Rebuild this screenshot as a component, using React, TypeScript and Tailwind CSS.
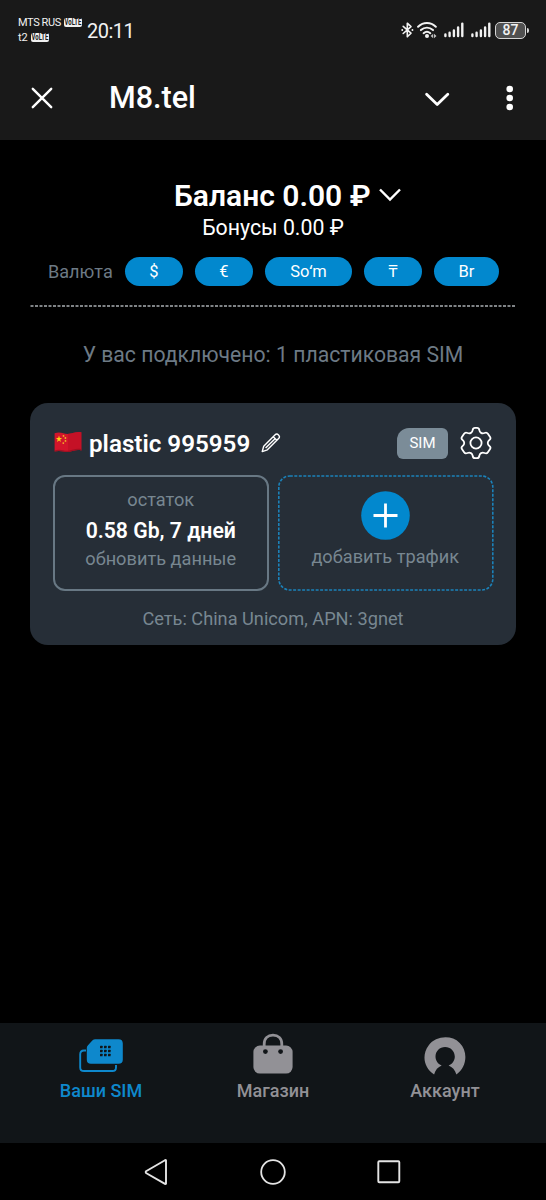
import React from 'react';
import { clsx } from 'clsx';

const currencies = [
  { label: '$', width: 'w-[58px]' },
  { label: '€', width: 'w-[58px]' },
  { label: 'Soʻm', width: 'w-[87px]' },
  { label: '₸', width: 'w-[58px]' },
  { label: 'Br', width: 'w-[65px]' },
];

function VolteBadge() {
  return (
    <span className="flex h-[9px] w-[18px] items-center justify-center rounded-[2px] bg-[#f0f0f0] text-[8.5px] leading-none font-bold text-[#191919]">
      <span className="scale-x-[0.7]">VoLTE</span>
    </span>
  );
}

function SignalIcon() {
  return (
    <svg width="20" height="16" viewBox="0 0 20 16" stroke="#f2f2f2" strokeWidth="2.4" strokeLinecap="round">
      <path d="M1.4 14V12.4M5.6 14V10.8M9.9 14V8.4M14.1 14V5.4M18.3 14V1.6" />
    </svg>
  );
}

function StatusBar() {
  return (
    <div className="flex h-[56px] items-start pl-[18px] text-[#f2f2f2]">
      <div className="mt-[15px] w-[69px] text-[11px] leading-[15px]">
        <div className="flex items-center gap-[4px]">
          <span className="w-[42px] tracking-[-0.4px] whitespace-nowrap">MTS RUS</span>
          <VolteBadge />
        </div>
        <div className="flex items-center gap-[4px]">
          <span className="w-[9px]">t2</span>
          <VolteBadge />
        </div>
      </div>
      <span className="mt-[19px] text-[20px] leading-[25px] tracking-[-0.5px]">20:11</span>
      <div className="mt-[20px] mr-[17px] ml-auto flex h-[20px] items-center">
        <svg width="13" height="18" viewBox="0 0 13 18" fill="none" stroke="#f2f2f2" strokeWidth="1.6" strokeLinecap="round" strokeLinejoin="round">
          <path d="M2.2 5.4L10 12.2L6.3 15.8V2.2L10 5.6L2.2 12.5" />
          <path d="M1.2 9H1.3M11.4 9H11.5" strokeWidth="1.8" />
        </svg>
        <svg className="ml-[3px]" width="20" height="18" viewBox="0 0 20 18" fill="none" stroke="#f2f2f2" strokeWidth="2" strokeLinecap="round">
          <path d="M1.1 5.7C6.3 0.9 13.6 0.9 18.8 5.7" />
          <path d="M3.9 9.1C7.5 5.9 12.4 5.9 16 9.1" />
          <path d="M6.6 12.2C8.6 10.5 11.3 10.5 13.3 12.2" />
          <circle cx="10" cy="15.1" r="2" fill="#f2f2f2" stroke="none" />
          <path d="M16.2 12.7V17.3L13.6 15ZM17 12.7V17.3L19.5 15Z" fill="#bdbdbd" stroke="none" />
        </svg>
        <div className="ml-[7px] flex gap-[7px]">
          <SignalIcon />
          <SignalIcon />
        </div>
        <div className="ml-[4px] flex h-[17px] w-[31px] items-center rounded-[5px] border-[1.5px] border-[#d5d5d5] bg-[#505050] text-[14px] leading-none font-medium">
          <span className="w-full text-center">87</span>
        </div>
        <div className="ml-[1px] h-[5px] w-[2px] rounded-r-sm bg-[#d5d5d5]" />
      </div>
    </div>
  );
}

function TopBar() {
  return (
    <div className="flex h-[84px] items-center text-white">
      <svg className="ml-[31px]" width="22" height="22" viewBox="0 0 22 22" fill="none" stroke="currentColor" strokeWidth="2.4" strokeLinecap="round">
        <path d="M1.8 1.8L20.2 20.2M20.2 1.8L1.8 20.2" />
      </svg>
      <h1 className="ml-[56px] text-[30.5px] leading-[36px] font-medium">M8.tel</h1>
      <svg className="mt-[2px] mr-[56px] ml-auto" width="26" height="16" viewBox="0 0 26 16" fill="none" stroke="currentColor" strokeWidth="2.8" strokeLinecap="round" strokeLinejoin="round">
        <path d="M2.6 3.3L13.2 13.6L23.8 3.3" />
      </svg>
      <svg className="mr-[32px]" width="8" height="26" viewBox="0 0 8 26" fill="currentColor">
        <circle cx="3.7" cy="4" r="3.3" />
        <circle cx="3.7" cy="13" r="3.3" />
        <circle cx="3.7" cy="22" r="3.3" />
      </svg>
    </div>
  );
}

function ChinaFlag() {
  return (
    <svg width="28" height="22" viewBox="0 0 28 22">
      <path d="M0.6 2.2C7 -0.2 10 3.6 15 2.8C20 2 22 0.3 27.4 1.3V19.4C22 18.2 19.5 20.3 14.8 20.9C9.5 21.5 6.8 18.6 0.6 20.6Z" fill="#d3152b" />
      <path d="M14 2.9C19.5 2.2 22 0.3 27.4 1.3V19.4C22 18.2 19.5 20.3 14 21Z" fill="#b80d22" opacity=".5" />
      <path d="M0.6 19.4C7 17.4 9.7 20.4 14.8 19.7C19.6 19 22 17 27.4 18.2V19.4C22 18.2 19.5 20.3 14.8 20.9C9.5 21.5 6.8 18.6 0.6 20.6Z" fill="#8f1020" opacity=".7" />
      <path d="M5 4.6L5.8 7L8.1 7L6.2 8.5L6.9 10.9L5 9.5L3 10.9L3.7 8.5L1.9 7L4.2 7Z" fill="#fbd116" />
      <g fill="#f0b429">
        <circle cx="9.5" cy="4.9" r=".9" />
        <circle cx="11.4" cy="7" r=".9" />
        <circle cx="11.5" cy="9.9" r=".9" />
        <circle cx="9.3" cy="12.1" r=".9" />
      </g>
    </svg>
  );
}

function SimCard() {
  return (
    <section className="mx-[30px] mt-[34px] h-[242px] rounded-[18px] bg-[#262e37] px-[23px] pt-[24px]">
      <div className="flex h-[32px] items-center">
        <div className="mb-[2px] ml-[1px]">
          <ChinaFlag />
        </div>
        <h2 className="mt-[2px] ml-[7px] text-[24.2px] leading-[32px] font-semibold whitespace-nowrap text-white">plastic 995959</h2>
        <svg className="mb-[1px] ml-[11px]" width="20" height="20" viewBox="0 0 20 20" fill="none" stroke="#fff" strokeWidth="1.4" strokeLinejoin="round">
          <path d="M1.2 18.6L2.7 13.2L13.9 2C15.1 0.8 16.4 0.8 17.5 1.9C18.7 3.1 18.7 4.4 17.6 5.6L6.4 16.8Z" />
          <path d="M12.2 3.7L15.9 7.3M4.6 15L14.3 5.4" />
        </svg>
        <span className="mr-[12px] ml-auto flex h-[31px] w-[51px] items-center justify-center rounded-[6px] rounded-tl-[12px] bg-[#7b8c98] text-[15px] text-white">
          SIM
        </span>
        <svg className="mr-[1px]" width="32" height="32" viewBox="0 0 32 32" fill="none" stroke="#fff" strokeWidth="1.8" strokeLinejoin="round">
          <circle cx="16" cy="16" r="5.6" />
          <path d="M12.7 3C12.9 1.6 13.8 0.9 15 0.9H17C18.2 0.9 19.1 1.6 19.3 3C19.6 5.6 21.9 7 24.5 6C26 5.4 27.2 5.7 27.9 6.8L30.1 10.1C30.8 11.2 30.5 12.2 29.4 13C27.2 14.6 27.2 17.4 29.4 19C30.5 19.8 30.8 20.8 30.1 21.9L27.9 25.2C27.2 26.3 26 26.6 24.5 26C21.9 25 19.6 26.4 19.3 29C19.1 30.4 18.2 31.1 17 31.1H15C13.8 31.1 12.9 30.4 12.7 29C12.4 26.4 10.1 25 7.5 26C6 26.6 4.8 26.3 4.1 25.2L1.9 21.9C1.2 20.8 1.5 19.8 2.6 19C4.8 17.4 4.8 14.6 2.6 13C1.5 12.2 1.2 11.2 1.9 10.1L4.1 6.8C4.8 5.7 6 5.4 7.5 6C10.1 7 12.4 5.6 12.7 3Z" />
        </svg>
      </div>

      <div className="mt-[16px] flex gap-[9px]">
        <button className="flex h-[116px] w-[216px] flex-col items-center rounded-[12px] border-2 border-[#687884] pt-[10px] text-[18.2px] leading-[26px] text-[#788791]">
          <span>остаток</span>
          <span className="mt-[3px] text-[21.2px] leading-[30px] font-semibold text-white">0.58 Gb, 7 дней</span>
          <span>обновить данные</span>
        </button>
        <button className="relative flex h-[116px] w-[216px] flex-col items-center pt-[16px] text-[18.2px] leading-[26px] text-[#788791]">
          <svg className="absolute inset-0" width="216" height="116" viewBox="0 0 216 116" fill="none">
            <rect x="0.8" y="1" width="214" height="114" rx="11" stroke="#1b82ba" strokeWidth="1.6" strokeDasharray="3 1.5" />
          </svg>
          <svg width="49" height="49" viewBox="0 0 49 49">
            <circle cx="24.5" cy="24.5" r="24.3" fill="#0288ce" />
            <path d="M24.5 12.5V36.5M12.5 24.5H36.5" stroke="#fff" strokeWidth="2.8" />
          </svg>
          <span className="mt-[4px]">добавить трафик</span>
        </button>
      </div>

      <p className="mt-[15px] text-center text-[18.2px] leading-[26px] text-[#788791]">Сеть: China Unicom, APN: 3gnet</p>
    </section>
  );
}

function SimIcon() {
  return (
    <svg width="46" height="40" viewBox="0 0 46 40">
      <path d="M8 14.5H6Q2.2 14.5 2.2 18.3V31.4Q2.2 35 6 35H34.4Q38 35 38 31.4V29" fill="none" stroke="#0e88cc" strokeWidth="1.9" />
      <path d="M17.3 3.2H40.5Q44.8 3.2 44.8 7.5V23.7Q44.8 27.8 40.5 27.8H12.9Q8.8 27.8 8.8 23.7V12Q8.8 10.4 10 9.2L14.3 4.6Q15.6 3.2 17.3 3.2Z" fill="#0e88cc" />
      <g fill="#111518">
        {[22, 26, 30].map((x) =>
          [9.7, 13.7, 17.7].map((y) => <rect key={`${x}-${y}`} x={x} y={y} width="2.6" height="2.6" rx=".5" />)
        )}
      </g>
    </svg>
  );
}

function BagIcon() {
  return (
    <svg className="mb-[1px]" width="42" height="42" viewBox="0 0 42 42">
      <path d="M12.2 14V11.2C12.2 5.6 15.8 2.1 21 2.1S29.8 5.6 29.8 11.2V14" fill="none" stroke="#929196" strokeWidth="2.8" />
      <rect x="1.4" y="12.6" width="39.2" height="28" rx="6.5" fill="#929196" />
      <circle cx="13.4" cy="18.6" r="2.4" fill="#111518" />
      <circle cx="28.6" cy="18.6" r="2.4" fill="#111518" />
    </svg>
  );
}

function AccountIcon() {
  return (
    <svg width="42" height="40" viewBox="0 0 42 40">
      <path
        d="M10.1 38.5C-0.6 31.4 -2.3 18.5 4.6 9.4C11.7 -0.1 27.2 -1.5 35.7 6.9C44.6 15.8 42.7 31.5 32.4 38.5C31.1 34.2 28.3 31 24.6 29.6C28.7 28 30.8 24.3 30.8 20.6C30.8 15.1 26.5 10.9 21.1 10.9S11.5 15.1 11.5 20.6C11.5 24.3 13.6 28 17.7 29.6C14 31 11.3 34.2 10.1 38.5Z"
        fill="#929196"
      />
    </svg>
  );
}

const tabs = [
  { label: 'Ваши SIM', icon: <SimIcon />, active: true },
  { label: 'Магазин', icon: <BagIcon />, active: false },
  { label: 'Аккаунт', icon: <AccountIcon />, active: false },
];

export default function App() {
  return (
    <div className="flex h-[1200px] w-[546px] flex-col overflow-hidden bg-black font-['Roboto','Noto_Sans',sans-serif]">
      <header className="bg-[#191919]">
        <StatusBar />
        <TopBar />
      </header>

      <main className="flex-1">
        <div className="mt-[39px] flex h-[34px] items-center pl-[174px] text-white">
          <span className="text-[30px] leading-[34px] font-semibold whitespace-nowrap">Баланс 0.00 ₽</span>
          <svg className="mb-[3px] ml-[8px]" width="22" height="14" viewBox="0 0 22 14" fill="none" stroke="currentColor" strokeWidth="2.4">
            <path d="M1 1.5L11 11.6L21 1.5" />
          </svg>
        </div>
        <p className="mt-px text-center text-[21.3px] leading-[28px] text-white">Бонусы 0.00 ₽</p>

        <div className="mt-[15px] flex h-[29px] items-center pl-[48px]">
          <span className="mt-px w-[77px] text-[18.1px] text-[#6d7a85]">Валюта</span>
          <div className="flex gap-[12px]">
            {currencies.map((currency) => (
              <button
                key={currency.label}
                className={clsx('h-[29px] rounded-full bg-[#0288ce] text-center text-[16.5px] leading-[29px] text-white', currency.width)}
              >
                {currency.label}
              </button>
            ))}
          </div>
        </div>

        <svg className="mx-[30px] mt-[19px] block" width="486" height="2" viewBox="0 0 486 2">
          <path d="M0.5 1H486" stroke="#a9aeb2" strokeWidth="1.4" strokeDasharray="3 1.5" />
        </svg>

        <p className="mt-[34px] text-center text-[21.2px] leading-[28px] text-[#6d7a85]">У вас подключено: 1 пластиковая SIM</p>

        <SimCard />
      </main>

      <nav className="flex h-[120px] bg-[#111518] px-[15px]">
        {tabs.map((tab) => (
          <div key={tab.label} className={clsx('flex flex-1 flex-col items-center text-[18px] font-medium', tab.active ? 'text-[#0e88cc]' : 'text-[#929196]')}>
            <div className="flex h-[53px] items-end">{tab.icon}</div>
            <span className="mt-[2px] leading-[26px]">{tab.label}</span>
          </div>
        ))}
      </nav>

      <div className="flex h-[57px] items-center pl-[144px]">
        <svg width="24" height="28" viewBox="0 0 24 28" fill="none" stroke="#e4e4e4" strokeWidth="1.9" strokeLinejoin="round">
          <path d="M22 2.2V25.8Q21.5 26.2 21 25.9L2 15Q1.3 14 2 13.2L21 2.2Q21.6 1.9 22 2.2Z" />
        </svg>
        <svg className="ml-[92px]" width="26" height="26" viewBox="0 0 26 26" fill="none" stroke="#e4e4e4" strokeWidth="1.8">
          <circle cx="13" cy="13" r="11.8" />
        </svg>
        <svg className="ml-[91px]" width="24" height="24" viewBox="0 0 24 24" fill="none" stroke="#e4e4e4" strokeWidth="1.9">
          <rect x="1.3" y="1.3" width="21" height="21" rx="1" />
        </svg>
      </div>
    </div>
  );
}
